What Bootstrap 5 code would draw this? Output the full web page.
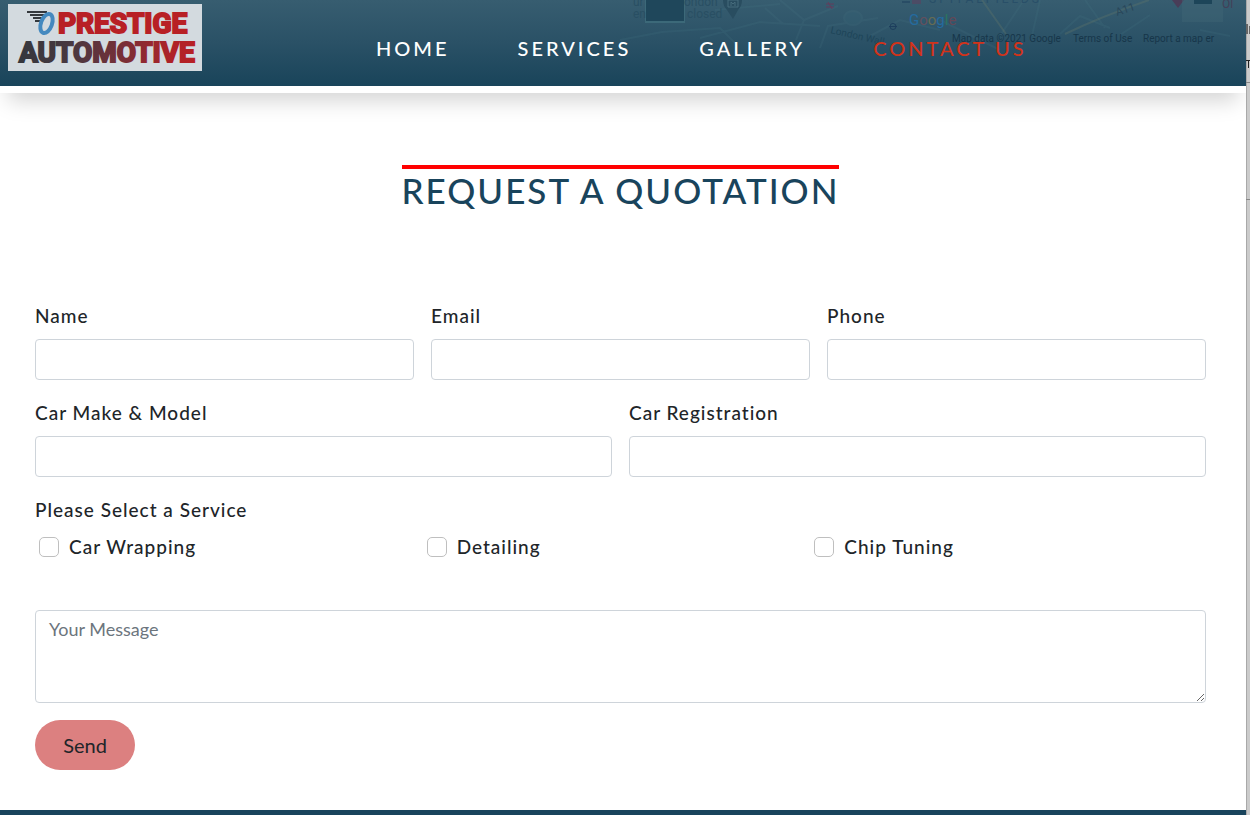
<!DOCTYPE html>
<html lang="en">
<head>
<meta charset="utf-8">
<meta name="viewport" content="width=device-width, initial-scale=1">
<title>Prestige Automotive - Request a Quotation</title>
<link href="https://cdn.jsdelivr.net/npm/bootstrap@5.3.0/dist/css/bootstrap.min.css" rel="stylesheet">
<style>
  body { font-family: Lato, "Open Sans", sans-serif; color: #212529; background: #fff; }
  .page-edge { width: 4px; flex: none; background: linear-gradient(90deg, #a9a9a9 0 1px, #cbcbcb 1px); overflow: hidden; }
  .top-bar { background: #fff; padding-bottom: 7px; box-shadow: 0 16px 20px -8px rgba(0,0,0,.17); }
  .site-nav { height: 86px; padding: 0; background: linear-gradient(#375d70, #2a5166 50%, #19445a); overflow: hidden; }
  .map-layer { position: absolute; top: 0; right: 0; }
  .brand-logo { display: block; margin: 4px 0 0 8px; align-self: flex-start; line-height: 0; }
  .main-links { margin-left: 174px; gap: 68px; padding-top: 9px; }
  .main-links .nav-link { font-size: 20px; font-weight: 500; line-height: 30px; letter-spacing: 3px; color: #fff; white-space: nowrap; }
  .main-links .nav-link.active { color: #d2331a; }
  .quote-area { padding: 72px 40px 40px 35px; }
  .quote-title { border-top: 4px solid #f00; color: #19445c; font-size: 35px; font-weight: 500; line-height: 42px; letter-spacing: 2px; margin-bottom: 91px; }
  .field-row { --bs-gutter-x: 17px; margin-bottom: 19px; }
  .quote-form .form-label, .quote-form .form-check-label { font-size: 19px; font-weight: 500; line-height: 28px; letter-spacing: 1px; }
  .quote-form .form-label { margin-bottom: 9px; padding: 0; }
  .quote-form .form-control { font-size: 18px; line-height: 27px; padding: 5px 13px; border-color: #ced4da; border-radius: 4px; }
  .quote-form .form-control::placeholder { color: #6c757d; }
  .quote-form input.form-control { height: 41px; }
  .quote-form textarea.form-control { height: 93px; }
  .service-list { padding: 0 4px; margin-bottom: 49px; }
  .service-list .form-check { display: flex; align-items: center; gap: 10px; padding: 0; margin: 0; min-height: 28px; }
  .service-list .form-check-input { width: 20px; height: 20px; margin: 0; border-color: #bfbfbf; border-radius: 5px; }
  .send-btn { width: 100px; height: 50px; margin-top: 17px; border-radius: 25px; background: #dc8080; border: 0; font-size: 20px; color: #212529; }
  .page-foot { height: 5px; background: #19445c; }
</style>
</head>
<body>
<div class="d-flex min-vh-100">
  <div class="flex-grow-1 d-flex flex-column">
    <header class="top-bar">
      <nav class="navbar navbar-expand site-nav position-relative flex-nowrap" aria-label="Main">
        <svg class="map-layer" width="640" height="86" viewBox="606 0 640 86" aria-hidden="true">
          <g fill="none" stroke="#4d7b89" stroke-width="2" opacity=".16">
            <path d="M620 40L662 32 720 28 736 44M700 38L760 22 820 26M715 10L780 4M765 8l18 16M780 0l24 20 34-14M804 20l-8 20M820 48l8-22 50-8M870 36l30-16 40 10M940 20l60 30M1000 36l24-36M1040 0l-8 36M1060 34l20-18 30 12M1085 0l20 28M1120 35l30-20M1200 30l30 6"/>
            <ellipse cx="853" cy="18" rx="9" ry="7" fill="#397080"/>
          </g>
          <path d="M982 0l24 34M1065 34q35-17 84-34" fill="none" stroke="#60766b" stroke-width="2" opacity=".35"/>
          <path d="M645 0h40v23h-40z" fill="#3c6979"/>
          <path d="M646 0h38v21h-38z" fill="#1f475b"/>
          <g fill="#294f63" font-family="Roboto, sans-serif" font-size="12">
            <text x="633" y="6">ur</text><text x="633" y="18">en</text><text x="684" y="6">ondon</text><text x="687" y="18">closed</text>
          </g>
          <path d="M723 0h19q0 6-4 10l-5 9-6-9q-4-4-4-10z" fill="#294d60"/>
          <path d="M728 7V0h10v7zM731 6V2l2 2 2-2v4" fill="none" stroke="#476c7c"/>
          <g fill="none" stroke="#633d5c" stroke-width="1"><path d="M826 4h8M826 7h8M828 2l4 7M912 1h9M912 3h9"/></g>
          <g fill="none" stroke="#1d3e5d"><circle cx="893" cy="26.500" r="3"/><path d="M889 26.500h8M902 2h8"/></g>
          <text x="830" y="33" transform="rotate(13 830 33)" font-family="Roboto, sans-serif" font-size="10" fill="#1e4559">London Wall</text>
          <text x="909" y="25" font-family="Roboto, sans-serif" font-size="15" fill="#30617e"><tspan fill="#246ba0">G</tspan><tspan fill="#63505e">o</tspan><tspan fill="#666c54">o</tspan><tspan fill="#246ba0">g</tspan><tspan fill="#2b7560">l</tspan><tspan fill="#634857">e</tspan></text>
          <text x="929" y="3" font-family="Roboto, sans-serif" font-size="12" letter-spacing="3" fill="#294f68">SPITALFIELDS</text>
          <text x="1117" y="16" transform="rotate(-18 1117 16)" font-family="Roboto, sans-serif" font-size="11" fill="#29475a">A11</text>
          <path d="M1172 0h12l-6 8z" fill="#493d58"/>
          <path d="M1182 0h41v22h-41z" fill="#416675" opacity=".45"/><path d="M1194 0h18v4h-18z" fill="#1d4559"/>
          <text x="1222" y="8" font-family="Roboto, sans-serif" font-size="12" fill="#433f58">Ol</text>
          <g font-family="Roboto, sans-serif" font-size="10" fill="#17364a">
            <text x="952" y="42">Map data ©2021 Google</text><text x="1073" y="42">Terms of Use</text><text x="1143" y="42">Report a map er</text>
          </g>
        </svg>
        <a class="brand-logo position-relative" href="#" aria-label="Prestige Automotive">
          <svg width="194" height="67" viewBox="8 4 194 67">
            <defs><linearGradient id="ink" gradientUnits="userSpaceOnUse" x1="18" y1="0" x2="198" y2="0"><stop offset="0" stop-color="#34373d"/><stop offset=".3" stop-color="#493840"/><stop offset=".6" stop-color="#7b2e36"/><stop offset=".85" stop-color="#ae2228"/><stop offset="1" stop-color="#b82025"/></linearGradient></defs>
            <path d="M8 4h194v67H8z" fill="#d3dadf"/>
            <path d="M27 12h20M30 15h15M33 18h9M35 21h6" stroke="#34383c" stroke-width="2"/>
            <ellipse cx="46.500" cy="23.500" rx="5.500" ry="10" transform="rotate(20 46.500 23.500)" fill="#d3dadf" stroke="#4489bf" stroke-width="4"/>
            <g font-family="Roboto, 'Liberation Sans', sans-serif" font-weight="700" stroke-width="2">
              <text x="58" y="33" font-size="28" fill="#b82025" stroke="#b82025">PRESTIGE</text>
              <text x="19" y="62" font-size="28" fill="url(#ink)" stroke="url(#ink)">AUTOMOTIVE</text>
            </g>
          </svg>
        </a>
        <ul class="navbar-nav main-links position-relative">
          <li class="nav-item"><a class="nav-link p-0" href="#">HOME</a></li>
          <li class="nav-item"><a class="nav-link p-0" href="#">SERVICES</a></li>
          <li class="nav-item"><a class="nav-link p-0" href="#">GALLERY</a></li>
          <li class="nav-item"><a class="nav-link p-0 active" href="#" aria-current="page">CONTACT US</a></li>
        </ul>
      </nav>
    </header>

    <main class="quote-area flex-grow-1">
      <div class="text-center"><h1 class="quote-title d-inline-block">REQUEST A QUOTATION</h1></div>
      <form class="quote-form">
        <div class="row field-row">
          <div class="col-4"><label class="form-label d-block" for="name">Name</label><input class="form-control" id="name" type="text"></div>
          <div class="col-4"><label class="form-label d-block" for="email">Email</label><input class="form-control" id="email" type="email"></div>
          <div class="col-4"><label class="form-label d-block" for="phone">Phone</label><input class="form-control" id="phone" type="tel"></div>
        </div>
        <div class="row field-row">
          <div class="col-6"><label class="form-label d-block" for="model">Car Make &amp; Model</label><input class="form-control" id="model" type="text"></div>
          <div class="col-6"><label class="form-label d-block" for="reg">Car Registration</label><input class="form-control" id="reg" type="text"></div>
        </div>
        <fieldset>
          <legend class="form-label">Please Select a Service</legend>
          <div class="service-list"><div class="row g-0">
            <div class="col-4"><div class="form-check"><input class="form-check-input" type="checkbox" id="wrap"><label class="form-check-label" for="wrap">Car Wrapping</label></div></div>
            <div class="col-4"><div class="form-check"><input class="form-check-input" type="checkbox" id="detail"><label class="form-check-label" for="detail">Detailing</label></div></div>
            <div class="col-4"><div class="form-check"><input class="form-check-input" type="checkbox" id="chip"><label class="form-check-label" for="chip">Chip Tuning</label></div></div>
          </div></div>
        </fieldset>
        <textarea class="form-control" placeholder="Your Message" aria-label="Your Message"></textarea>
        <button class="btn send-btn" type="submit">Send</button>
      </form>
    </main>
    <footer class="page-foot"></footer>
  </div>
  <div class="page-edge" aria-hidden="true">
    <svg class="d-block" width="4" height="210" viewBox="0 0 4 210"><path d="M0 24h2v10H0zM3 26h1v8H3z" fill="#666"/><path d="M0 60h4v1H0zM2 61h1v7H2z" fill="#222"/><path d="M0 82h4v1H0zM0 199h4v1H0z" fill="#888"/></svg>
  </div>
</div>
<script src="https://cdn.jsdelivr.net/npm/bootstrap@5.3.0/dist/js/bootstrap.bundle.min.js"></script>
</body>
</html>
